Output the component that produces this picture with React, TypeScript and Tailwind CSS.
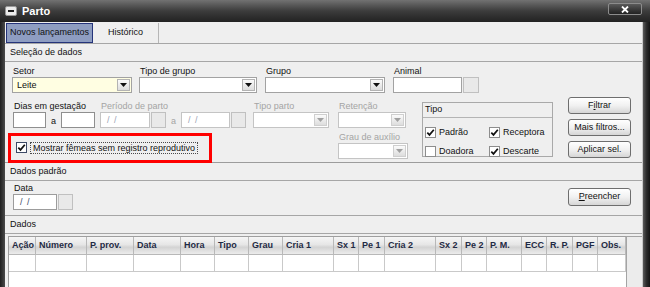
import type { ReactNode } from "react";

const FONT = "font-['Liberation_Sans',Arial,sans-serif]";

const tableCols = [
  "Ação",
  "Número",
  "P. prov.",
  "Data",
  "Hora",
  "Tipo",
  "Grau",
  "Cria 1",
  "Sx 1",
  "Pe 1",
  "Cria 2",
  "Sx 2",
  "Pe 2",
  "P. M.",
  "ECC",
  "R. P.",
  "PGF",
  "Obs.",
];

const gridCols =
  "grid grid-cols-[27px_51px_47px_47px_34px_34px_34px_51px_25px_26px_51px_26px_25px_35px_25px_26px_25px_28px]";

function Label({ children, disabled = false }: { children: ReactNode; disabled?: boolean }) {
  return (
    <div
      className={`h-[11px] whitespace-nowrap pl-px leading-[11px] ${
        disabled ? "text-[#a4a4a4]" : "text-[#111]"
      }`}
    >
      {children}
    </div>
  );
}

function DropArrow({ disabled = false }: { disabled?: boolean }) {
  return (
    <span
      className={`flex w-[13px] shrink-0 items-center justify-center border bg-gradient-to-b from-[#fbfbfb] to-[#dddddd] ${
        disabled ? "border-[#cfcfcf]" : "border-[#b3b3b3]"
      }`}
    >
      <svg width="7" height="4" viewBox="0 0 7 4" aria-hidden="true">
        <path d="M0 0h7L3.5 4z" fill={disabled ? "#a0a0a0" : "#111"} />
      </svg>
    </span>
  );
}

function Combo({
  width,
  value = "",
  disabled = false,
  yellow = false,
}: {
  width: string;
  value?: string;
  disabled?: boolean;
  yellow?: boolean;
}) {
  return (
    <div
      className={`flex h-[16px] ${width} border p-px ${
        disabled ? "border-[#c4c4c4]" : "border-[#a2a2a2]"
      } ${yellow ? "bg-[#fffee2]" : "bg-white"}`}
    >
      <span className="flex-1 pl-[3px] leading-[12px] text-[#111]">{value}</span>
      <DropArrow disabled={disabled} />
    </div>
  );
}

function DateField({ width, disabled = false }: { width: string; disabled?: boolean }) {
  return (
    <div className="flex h-[16px]">
      <div
        className={`${width} border bg-white pl-[6px] leading-[14px] tracking-[1px] ${
          disabled ? "border-[#c4c4c4] text-[#9aa3b5]" : "border-[#9c9c9c] text-[#3a4a6c]"
        }`}
      >
        / /
      </div>
      <div className="ml-px w-[15px] border border-[#c0c0c0] bg-[#e9e9e9]" />
    </div>
  );
}

function Check({ checked = false, focus = false }: { checked?: boolean; focus?: boolean }) {
  return (
    <span
      className={`flex h-[11px] w-[11px] shrink-0 items-center justify-center border bg-white ${
        focus ? "border-[#3d4a66]" : "border-[#8d8d8d]"
      }`}
    >
      {checked && (
        <svg width="9" height="9" viewBox="0 0 9 9" aria-hidden="true">
          <path d="M1.3 4.6 3.5 6.9 7.8 1.8" fill="none" stroke="#111" strokeWidth="1.7" />
        </svg>
      )}
    </span>
  );
}

function Btn({ children }: { children: ReactNode }) {
  return (
    <button
      type="button"
      className="flex h-[17px] w-[63px] items-center justify-center rounded-[3px] border border-[#6e6e6e] bg-gradient-to-b from-white via-[#f1f1f1] to-[#d6d6d6] text-[9px] text-[#111]"
    >
      {children}
    </button>
  );
}

function SectionHeader({ children }: { children: ReactNode }) {
  return (
    <div className="flex h-[18px] shrink-0 items-center border-b border-[#a6a6a6] pl-[5px] text-[#111]">
      {children}
    </div>
  );
}

export default function App() {
  return (
    <div
      className={`${FONT} flex h-[287px] w-[650px] flex-col overflow-hidden bg-[#2a2a2a] text-[9px] text-[#111]`}
    >
      {/* title bar */}
      <div className="flex h-[22px] shrink-0 items-center bg-gradient-to-b from-[#727272] via-[#3c3c3c] to-[#222] pl-[5px] pr-[8px]">
        <span className="flex h-[10px] w-[12px] items-center justify-center rounded-[2px] border border-[#999] bg-[#ececec]">
          <span className="h-[2px] w-[6px] bg-[#1d1d1d]" />
        </span>
        <span className="ml-[5px] text-[11px] font-bold text-white">Parto</span>
        <button
          type="button"
          className="ml-auto flex h-[12px] w-[34px] self-start mt-[3px] items-center justify-center rounded-[2px] border border-[#8c8c8c] bg-gradient-to-b from-[#5a5a5a] to-[#222]"
          aria-label="Fechar"
        >
          <svg width="8" height="7" viewBox="0 0 8 7" aria-hidden="true">
            <path d="M1 0.5 7 6.5M7 0.5 1 6.5" stroke="#fff" strokeWidth="1.8" />
          </svg>
        </button>
      </div>

      <div className="flex flex-1">
        <div className="w-[5px] bg-gradient-to-r from-[#1f1f1f] to-[#4c4c4c]" />

        <div className="flex w-[638px] flex-col border-r border-[#c9c9c9] bg-[#efefef]">
          {/* tabs */}
          <div className="flex h-[22px] shrink-0 items-end border-b border-[#a6a6a6] pl-px">
            <div className="flex h-[20px] w-[87px] items-center justify-center border border-[#25347a] bg-[#8e9dc1] text-[#111]">
              Novos lançamentos
            </div>
            <div className="flex h-[20px] w-[66px] items-center justify-center border-r border-[#b6b6b6] text-[#111]">
              Histórico
            </div>
          </div>

          <SectionHeader>Seleção de dados</SectionHeader>

          {/* seleção de dados */}
          <div className="flex h-[101px] shrink-0 flex-col border-b border-[#9c9c9c]">
            <div className="mt-[4px] flex pl-[7px]">
              <div>
                <Label>Setor</Label>
                <Combo width="w-[120px]" value="Leite" yellow />
              </div>
              <div className="ml-[7px]">
                <Label>Tipo de grupo</Label>
                <Combo width="w-[118px]" />
              </div>
              <div className="ml-[8px]">
                <Label>Grupo</Label>
                <Combo width="w-[120px]" />
              </div>
              <div className="ml-[8px]">
                <Label>Animal</Label>
                <div className="flex h-[16px]">
                  <div className="w-[69px] border border-[#a2a2a2] bg-white" />
                  <div className="ml-px w-[16px] border border-[#c0c0c0] bg-[#e9e9e9]" />
                </div>
              </div>
            </div>

            <div className="mt-[4px] flex pl-[3px]">
              <div className="flex flex-col">
                <div className="flex pt-[4px]">
                  <div className="ml-[5px]">
                    <Label>Dias em gestação</Label>
                    <div className="flex h-[16px] items-center">
                      <div className="h-[16px] w-[33px] border border-[#8f8f8f] bg-white" />
                      <span className="w-[15px] pt-[3px] text-center">a</span>
                      <div className="h-[16px] w-[34px] border border-[#8f8f8f] bg-white" />
                    </div>
                  </div>
                  <div className="ml-[5px]">
                    <Label disabled>Período de parto</Label>
                    <div className="flex items-center">
                      <DateField width="w-[50px]" disabled />
                      <span className="w-[15px] pt-[3px] text-center text-[#a4a4a4]">a</span>
                      <DateField width="w-[49px]" disabled />
                    </div>
                  </div>
                  <div className="ml-[7px]">
                    <Label disabled>Tipo parto</Label>
                    <Combo width="w-[76px]" disabled />
                  </div>
                </div>

                <div className="mt-[4px] flex h-[30px] w-[204px] items-center border-[3px] border-[#ff0000] pl-[5px]">
                  <Check checked focus />
                  <span className="ml-[3px] whitespace-nowrap border border-dotted border-[#4a4a4a] px-[2px] leading-[10px]">
                    Mostrar fêmeas sem registro reprodutivo
                  </span>
                </div>
              </div>

              <div className="ml-[9px] flex flex-col pt-[4px]">
                <Label disabled>Retenção</Label>
                <Combo width="w-[68px]" disabled />
                <div className="mt-[4px]">
                  <Label disabled>Grau de auxílio</Label>
                </div>
                <Combo width="w-[70px]" disabled />
              </div>

              <div className="ml-[14px] mt-[5px] flex h-[55px] w-[131px] flex-col border border-[#a9a9a9]">
                <div className="flex h-[16px] items-center border-b border-[#b4b4b4] pl-[2px]">Tipo</div>
                <div className="mt-[8px] grid grid-cols-[64px_64px] gap-y-[6px] pl-[2px]">
                  <div className="flex items-center gap-[3px]">
                    <Check checked />
                    <span>Padrão</span>
                  </div>
                  <div className="flex items-center gap-[3px]">
                    <Check checked />
                    <span>Receptora</span>
                  </div>
                  <div className="flex items-center gap-[3px]">
                    <Check />
                    <span>Doadora</span>
                  </div>
                  <div className="flex items-center gap-[3px]">
                    <Check checked />
                    <span>Descarte</span>
                  </div>
                </div>
              </div>

              <div className="ml-[15px] flex flex-col gap-[5px]">
                <Btn>
                  F<span className="underline">i</span>ltrar
                </Btn>
                <Btn>Mais filtros...</Btn>
                <Btn>Aplicar sel.</Btn>
              </div>
            </div>
          </div>

          <SectionHeader>Dados padrão</SectionHeader>

          <div className="flex h-[35px] shrink-0 items-start border-b border-[#a6a6a6] pl-[8px] pr-[11px]">
            <div className="mt-[2px]">
              <Label>Data</Label>
              <DateField width="w-[44px]" />
            </div>
            <button
              type="button"
              className="ml-auto mt-[7px] flex h-[18px] w-[63px] items-center justify-center rounded-[3px] border border-[#6e6e6e] bg-gradient-to-b from-white via-[#f1f1f1] to-[#d6d6d6] text-[9px] text-[#111]"
            >
              <span className="underline">P</span>reencher
            </button>
          </div>

          <SectionHeader>Dados</SectionHeader>

          {/* table */}
          <div className="flex flex-1 pl-[3px] pt-[2px]">
            <div className="flex w-[618px] flex-col border-l border-t border-[#9f9f9f] bg-white">
              <div className={`${gridCols} h-[18px] border-b border-[#b8b8b8] bg-[linear-gradient(to_bottom,#f6f6f6_0%,#e6e6e6_45%,#d3d3d3_60%,#ececec_100%)]`}>
                {tableCols.map((c) => (
                  <div
                    key={c}
                    className="flex items-center whitespace-nowrap border-r border-[#b8b8b8] pl-[3px] font-bold text-[#1f2a44]"
                  >
                    {c}
                  </div>
                ))}
              </div>
              <div className={`${gridCols} h-[17px] border-b border-[#c9c9c9]`}>
                {tableCols.map((c) => (
                  <div key={c} className="border-r border-[#c9c9c9]" />
                ))}
              </div>
            </div>
            <div className="w-[16px] border-l border-t border-[#a4a4a4] bg-[#ececec]" />
          </div>
        </div>

        <div className="w-[7px] bg-gradient-to-r from-[#5a5a5a] via-[#2c2c2c] to-[#141414]" />
      </div>
    </div>
  );
}
